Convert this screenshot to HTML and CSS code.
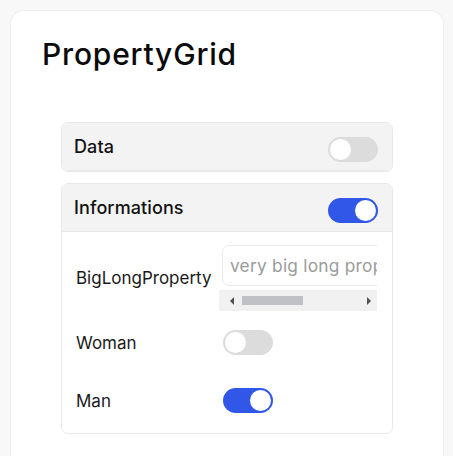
FILE: index.html
```html
<!DOCTYPE html>
<html lang="en">
<head>
<meta charset="utf-8">
<title>PropertyGrid</title>
<link rel="stylesheet" href="styles.css">
</head>
<body>
<div class="card">
  <h1 class="title">PropertyGrid</h1>
  <div class="panels">
    <section class="panel">
      <header class="panel-head">
        <span class="panel-name">Data</span>
        <span class="toggle head-toggle"><span class="knob"></span></span>
      </header>
    </section>
    <section class="panel">
      <header class="panel-head">
        <span class="panel-name">Informations</span>
        <span class="toggle on head-toggle"><span class="knob"></span></span>
      </header>
      <div class="panel-body">
        <div class="row row-first">
          <span class="label">BigLongProperty</span>
          <div class="value scroll-box">
            <div class="scroll-content">
              <input class="text-input" type="text" placeholder="very big long property value placeholder">
            </div>
            <div class="scrollbar">
              <span class="arrow arrow-left"></span>
              <span class="track"><span class="thumb"></span></span>
              <span class="arrow arrow-right"></span>
            </div>
          </div>
        </div>
        <div class="row">
          <span class="label">Woman</span>
          <div class="value"><span class="toggle"><span class="knob"></span></span></div>
        </div>
        <div class="row">
          <span class="label">Man</span>
          <div class="value"><span class="toggle on"><span class="knob"></span></span></div>
        </div>
      </div>
    </section>
  </div>
</div>
</body>
</html>
```
FILE: styles.css
```css
* { box-sizing: border-box; }
html, body { margin: 0; height: 100%; }
body {
  background: #f8f8f8;
  font-family: Inter, "Noto Sans", sans-serif;
  color: #111;
  padding: 10px 9px 0 10px;
  overflow: hidden;
}
.card {
  background: #fff;
  border: 1px solid #efefef;
  border-bottom: 0;
  border-radius: 14px 14px 0 0;
  height: 100%;
  padding: 25px 0 0 0;
}
.title {
  margin: 0 0 50px 31px;
  font-size: 30px;
  line-height: 36px;
  font-weight: 500;
  letter-spacing: 0.8px;
  color: #0a0a0a;
}
.panels {
  padding: 0 50px;
  display: flex;
  flex-direction: column;
  gap: 11px;
}
.panel {
  border: 1px solid #e8e8e8;
  border-radius: 7px;
  background: #fff;
  overflow: hidden;
}
.panel-head {
  background: #f3f3f3;
  height: 48px;
  display: flex;
  align-items: center;
  justify-content: space-between;
  padding: 0 14px 0 12px;
  border-bottom: 1px solid #e8e8e8;
}
.panel-name {
  font-size: 18px;
  font-weight: 500;
  letter-spacing: 0.1px;
  color: #111;
}
.head-toggle { margin-top: 5px; }
.toggle {
  display: inline-flex;
  align-items: center;
  width: 50px;
  height: 25px;
  border-radius: 13px;
  background: #dcdcdc;
  padding: 2px;
}
.toggle .knob {
  width: 21px;
  height: 21px;
  border-radius: 50%;
  background: #fff;
}
.toggle.on {
  background: #3057e8;
  justify-content: flex-end;
}
.panel-body {
  padding: 0 0 3px;
}
.row {
  display: flex;
  align-items: center;
  height: 58px;
  padding: 0 15px 0 14px;
}
.row-first {
  height: auto;
  padding-top: 13px;
  padding-bottom: 3px;
}
.label {
  width: 143px;
  font-size: 17px;
  color: #1a1a1a;
}
.value {
  width: 158px;
}
.value .toggle { margin-left: 4px; }
.scroll-box {
  display: flex;
  flex-direction: column;
  overflow: hidden;
}
.scroll-content {
  padding: 0 0 4px 3px;
  height: 45px;
  overflow: hidden;
  white-space: nowrap;
}
.text-input {
  width: 220px;
  height: 41px;
  border: 1px solid #ebebeb;
  border-radius: 7px;
  padding: 0 7px;
  font-family: Inter, "Noto Sans", sans-serif;
  font-size: 17.3px;
  letter-spacing: 0.25px;
  color: #333;
  background: #fff;
  outline: none;
}
.text-input::placeholder { color: #9b9b9b; }
.scrollbar {
  height: 21px;
  background: #f1f1f1;
  display: flex;
  align-items: center;
}
.arrow {
  width: 0;
  height: 0;
  border-top: 4px solid transparent;
  border-bottom: 4px solid transparent;
}
.arrow-left {
  border-right: 4px solid #505050;
  margin-left: 11px;
}
.arrow-right {
  border-left: 4px solid #505050;
  margin-right: 6px;
}
.track {
  flex: 1;
  padding: 0 6px 0 8px;
}
.thumb {
  display: block;
  width: 61px;
  height: 9px;
  background: #c0c1c6;
}
```
